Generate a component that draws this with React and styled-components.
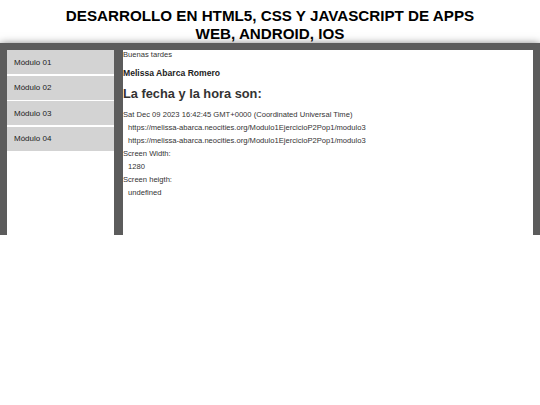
import styled, { createGlobalStyle } from "styled-components";

const GlobalStyle = createGlobalStyle`
  body {
    margin: 0;
    background: #ffffff;
    font-family: "Liberation Sans", Arial, sans-serif;
    color: #333;
    -webkit-font-smoothing: antialiased;
  }
`;

const Title = styled.h1`
  margin: 0;
  padding-top: 7px;
  text-align: center;
  font-size: 15.2px;
  line-height: 18px;
  font-weight: bold;
  color: #000;
`;

const Frame = styled.div`
  display: flex;
  gap: 9px;
  height: 192px;
  padding: 7px 7px 0;
  box-sizing: border-box;
  background: #5c5c5c;
  box-shadow: 0 2px 9px rgba(0, 0, 0, 0.7);
`;

const Sidebar = styled.nav`
  flex: 0 0 107px;
  height: 190px;
  background: #fff;
  display: flex;
  flex-direction: column;
  gap: 1.5px;
`;

const NavItem = styled.a`
  display: flex;
  align-items: center;
  height: 24px;
  padding-left: 7px;
  background: #d3d3d3;
  font-size: 8px;
  color: #222;
  text-decoration: none;
`;

const Content = styled.main`
  flex: 1;
  height: 190px;
  background: #fff;
  font-size: 7.6px;
  color: #333;
`;

const Greeting = styled.div`
  line-height: 9px;
`;

const Name = styled.p`
  margin: 9px 0 0;
  font-size: 8.6px;
  font-weight: bold;
  color: #222;
`;

const Heading = styled.h2`
  margin: 8px 0 7px;
  font-size: 12.8px;
  font-weight: bold;
  color: #333;
`;

const Line = styled.div`
  line-height: 13px;
  padding-left: ${(p) => (p.$indent ? "5px" : "0")};
`;

const modules = ["Módulo 01", "Módulo 02", "Módulo 03", "Módulo 04"];
const url = "https://melissa-abarca.neocities.org/Modulo1EjercicioP2Pop1/modulo3";

export default function App() {
  return (
    <>
      <GlobalStyle />
      <Title>
        DESARROLLO EN HTML5, CSS Y JAVASCRIPT DE APPS
        <br />
        WEB, ANDROID, IOS
      </Title>
      <Frame>
        <Sidebar>
          {modules.map((m) => (
            <NavItem key={m} href="#">
              {m}
            </NavItem>
          ))}
        </Sidebar>
        <Content>
          <Greeting>Buenas tardes</Greeting>
          <Name>Melissa Abarca Romero</Name>
          <Heading>La fecha y la hora son:</Heading>
          <Line>Sat Dec 09 2023 16:42:45 GMT+0000 (Coordinated Universal Time)</Line>
          <Line $indent>{url}</Line>
          <Line $indent>{url}</Line>
          <Line>Screen Width:</Line>
          <Line $indent>1280</Line>
          <Line>Screen heigth:</Line>
          <Line $indent>undefined</Line>
        </Content>
      </Frame>
    </>
  );
}
